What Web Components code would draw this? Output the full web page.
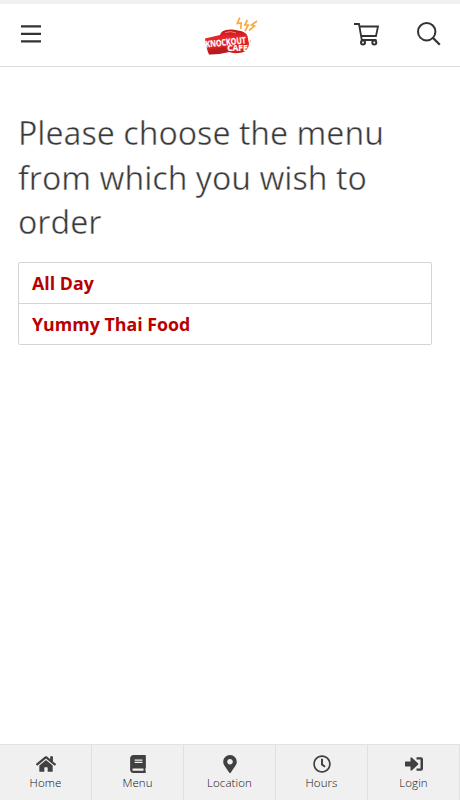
<!DOCTYPE html>
<html lang="en">
<head>
<meta charset="utf-8">
<meta name="viewport" content="width=device-width, initial-scale=1">
<title>Knockout Cafe</title>
<style>
  body {
    margin: 0;
    font-family: "Open Sans", "Noto Sans", sans-serif;
    color: #383838;
    background: #fff;
  }
</style>
</head>
<body>
<cafe-app>
  <cafe-header slot="header"></cafe-header>
  <menu-chooser>
    <span slot="title">Please choose the menu from which you wish to order</span>
    <menu-option>All Day</menu-option>
    <menu-option>Yummy Thai Food</menu-option>
  </menu-chooser>
  <tab-bar slot="footer">
    <tab-item icon="home">Home</tab-item>
    <tab-item icon="book">Menu</tab-item>
    <tab-item icon="marker">Location</tab-item>
    <tab-item icon="clock">Hours</tab-item>
    <tab-item icon="login">Login</tab-item>
  </tab-bar>
</cafe-app>

<script>
class CafeElement extends HTMLElement {
  constructor() {
    super();
    this.attachShadow({ mode: "open" });
  }

  connectedCallback() {
    this.shadowRoot.innerHTML = `<style>${this.constructor.styles}</style>${this.render()}`;
  }
}

class CafeApp extends CafeElement {
  static get styles() {
    return /* css */`
      :host {
        display: flex;
        flex-direction: column;
        height: 100vh;
        box-sizing: border-box;
        border-top: 4px solid #f0f0f0;
        overflow: hidden;
      }
      main { flex: 1; min-height: 0; }
    `;
  }

  render() {
    return /* html */`
      <slot name="header"></slot>
      <main><slot></slot></main>
      <slot name="footer"></slot>
    `;
  }
}

class CafeLogo extends CafeElement {
  static get styles() {
    return /* css */`
      :host { display: block; width: 56px; height: 44px; }
      svg { display: block; }
      text {
        font-family: "Open Sans", sans-serif;
        font-weight: 700;
        fill: #fff;
      }
    `;
  }

  render() {
    return /* html */`
      <svg width="56" height="44" viewBox="0 0 56 44">
        <defs>
          <linearGradient id="glove" x1="0" y1="0" x2="0" y2="1">
            <stop offset="0" stop-color="#b5181b"/>
            <stop offset=".3" stop-color="#e8262a"/>
            <stop offset=".65" stop-color="#e02024"/>
            <stop offset="1" stop-color="#c91d20"/>
          </linearGradient>
        </defs>
        <path fill="url(#glove)" d="M2 26.500L17 23Q18 19 23 18Q29 17 35 18.500Q43 19.500 44.500 24L46 32Q45 39 39 40.500Q31 42 26 40Q16 42.500 6 42.500Q3 36 2 26.500Z"/>
        <path fill="#8f1718" d="M5 38L22 35Q24 38 26 40Q16 42.500 6 42.500Z" opacity=".4"/>
        <path fill="none" stroke="#ff7a70" stroke-width="1" d="M22 20.500Q28 18.500 33 21"/>
        <text x="2.800" y="35.500" font-size="9" textLength="40.500" lengthAdjust="spacingAndGlyphs" transform="rotate(-6 2.800 35.500)" stroke="#fff" stroke-width=".2">KNOCKOUT</text>
        <text x="24.200" y="38.700" font-size="8.600" textLength="20.500" lengthAdjust="spacingAndGlyphs" stroke="#fff" stroke-width=".2">CAFE</text>
        <path fill="none" stroke="#f0a090" stroke-width=".7" d="M46.500 31l1.200-3"/>
        <g fill="none" stroke="#fba93a" stroke-width="1.700">
          <path d="M36.800 5.500L34.300 11.500L38.200 11L37.800 17"/>
          <path d="M44.500 8L41.800 13L45.200 13L42 19"/>
          <path d="M54 9L48.500 13L51.500 14L46 18.500"/>
        </g>
      </svg>
    `;
  }
}

class CafeHeader extends CafeElement {
  static get styles() {
    return /* css */`
      :host { display: block; }
      header {
        display: grid;
        grid-template-columns: 1fr auto 1fr;
        align-items: center;
        height: 62px;
        padding: 0 19px 0 21px;
        border-bottom: 1px solid #ddd;
      }
      svg { display: block; fill: none; stroke: #333; stroke-width: 2; }
      .tools { display: flex; justify-content: flex-end; gap: 37px; padding-bottom: 2px; }
      .menu { padding-bottom: 3px; }
      cafe-logo { margin-top: -2px; }
    `;
  }

  render() {
    return /* html */`
      <header>
        <svg class="menu" width="20" height="18" viewBox="0 0 20 18">
          <path stroke-width="2.300" d="M0 1.300h20M0 8.800h20M0 16.300h20"/>
        </svg>
        <cafe-logo></cafe-logo>
        <div class="tools">
          <svg width="26" height="24" viewBox="0 0 26 24">
            <path stroke-width="1.800" d="M0 2h5l2.800 16h14.700M5.500 4.500h18.500l-2 9.500H7.500"/>
            <circle cx="9" cy="20.500" r="2"/><circle cx="20.300" cy="20.500" r="2"/>
          </svg>
          <svg width="24" height="24" viewBox="0 0 24 24">
            <circle cx="9.700" cy="9.700" r="8.700"/><path stroke-width="2.300" d="M15.800 15.800l7 7"/>
          </svg>
        </div>
      </header>
    `;
  }
}

class MenuChooser extends CafeElement {
  static get styles() {
    return /* css */`
      :host { display: block; padding: 44px 28px 0 18px; }
      h1 {
        margin: 0 0 17px;
        font-size: 32.200px;
        font-weight: 400;
        line-height: 44.500px;
        -webkit-text-stroke: .4px #fff;
      }
      .list {
        border: 1px solid #d5d5d5;
        border-radius: 2px;
      }
    `;
  }

  render() {
    return /* html */`
      <h1><slot name="title"></slot></h1>
      <div class="list"><slot></slot></div>
    `;
  }
}

class MenuOption extends CafeElement {
  static get styles() {
    return /* css */`
      :host {
        display: block;
        padding: 0 13px;
        font-size: 17.800px;
        font-weight: 700;
        line-height: 40px;
        color: #b80000;
      }
      :host(:not(:last-child)) { border-bottom: 1px solid #d5d5d5; }
    `;
  }

  render() {
    return `<slot></slot>`;
  }
}

class TabBar extends CafeElement {
  static get styles() {
    return /* css */`
      :host {
        display: grid;
        grid-template-columns: repeat(5, 1fr);
        height: 55px;
        background: #f0f0f0;
        border-top: 1px solid #e2e2e2;
      }
    `;
  }

  render() {
    return `<slot></slot>`;
  }
}

const ICONS = {
  home: { box: "0 0 576 512", width: 20, path: "M280.37 148.26L96 300.11V464a16 16 0 0 0 16 16l112.06-.29a16 16 0 0 0 15.92-16V368a16 16 0 0 1 16-16h64a16 16 0 0 1 16 16v95.64a16 16 0 0 0 16 16.05L464 480a16 16 0 0 0 16-16V300L295.67 148.26a12.19 12.19 0 0 0-15.3 0zM571.6 251.47L488 182.56V44.05a12 12 0 0 0-12-12h-56a12 12 0 0 0-12 12v72.61L318.47 43a48 48 0 0 0-61 0L4.34 251.47a12 12 0 0 0-1.6 16.9l25.5 31A12 12 0 0 0 45.15 301l235.22-193.74a12.19 12.19 0 0 1 15.3 0L530.9 301a12 12 0 0 0 16.9-1.6l25.5-31a12 12 0 0 0-1.7-16.93z" },
  book: { box: "0 0 448 512", width: 16, path: "M448 360V24c0-13.3-10.7-24-24-24H96C43 0 0 43 0 96v320c0 53 43 96 96 96h328c13.3 0 24-10.7 24-24v-16c0-7.5-3.5-14.3-8.9-18.7-4.2-15.4-4.2-59.3 0-74.7 5.4-4.3 8.9-11.1 8.9-18.6zM128 134c0-3.3 2.7-6 6-6h212c3.3 0 6 2.7 6 6v20c0 3.3-2.7 6-6 6H134c-3.3 0-6-2.7-6-6v-20zm0 64c0-3.3 2.7-6 6-6h212c3.3 0 6 2.7 6 6v20c0 3.3-2.7 6-6 6H134c-3.3 0-6-2.7-6-6v-20zm253.4 250H96c-17.7 0-32-14.3-32-32 0-17.6 14.4-32 32-32h285.4c-1.9 17.1-1.9 46.9 0 64z" },
  marker: { box: "0 0 384 512", width: 14, path: "M172.268 501.670C26.970 291.031 0 269.413 0 192 0 85.961 85.961 0 192 0s192 85.961 192 192c0 77.413-26.970 99.031-172.268 309.670-9.535 13.774-29.930 13.773-39.464 0zM192 272c44.183 0 80-35.817 80-80s-35.817-80-80-80-80 35.817-80 80 35.817 80 80 80z" },
  clock: { box: "0 0 512 512", width: 18, path: "M256 8C119 8 8 119 8 256s111 248 248 248 248-111 248-248S393 8 256 8zm0 448c-110.5 0-200-89.5-200-200S145.5 56 256 56s200 89.5 200 200-89.5 200-200 200zm61.8-104.4l-84.9-61.7c-3.1-2.3-4.900-5.9-4.900-9.7V116c0-6.6 5.4-12 12-12h32c6.6 0 12 5.4 12 12v141.700l66.800 48.600c5.4 3.9 6.5 11.4 2.600 16.800L334.600 349c-3.900 5.300-11.400 6.500-16.800 2.600z" },
  login: { box: "0 0 18 18", width: 18, path: "M.5 6.500H5.500V3.300Q5.600 1.700 7 2.700L13 8.300Q13.700 9 13 9.700L7 15.300Q5.600 16.300 5.500 14.700V11.500H.5Q0 11.500 0 11V7Q0 6.500 .5 6.500ZM11.500 2.300H16Q18 2.300 18 4.300V13.700Q18 15.700 16 15.700H11.500V13.400H15.500V4.600H11.500Z" },
};

class TabItem extends CafeElement {
  static get styles() {
    return /* css */`
      :host {
        display: flex;
        flex-direction: column;
        align-items: center;
        padding-top: 10px;
        border-right: 1px solid #e0e0e0;
        font-size: 11.500px;
        font-weight: 300;
        line-height: 20px;
        letter-spacing: .1px;
        color: #111;
      }
      svg { display: block; height: 18px; fill: #404040; }
    `;
  }

  render() {
    const icon = ICONS[this.getAttribute("icon")];
    return /* html */`
      <svg width="${icon.width}" viewBox="${icon.box}"><path d="${icon.path}"/></svg>
      <slot></slot>
    `;
  }
}

customElements.define("cafe-app", CafeApp);
customElements.define("cafe-logo", CafeLogo);
customElements.define("cafe-header", CafeHeader);
customElements.define("menu-chooser", MenuChooser);
customElements.define("menu-option", MenuOption);
customElements.define("tab-bar", TabBar);
customElements.define("tab-item", TabItem);
</script>
</body>
</html>
